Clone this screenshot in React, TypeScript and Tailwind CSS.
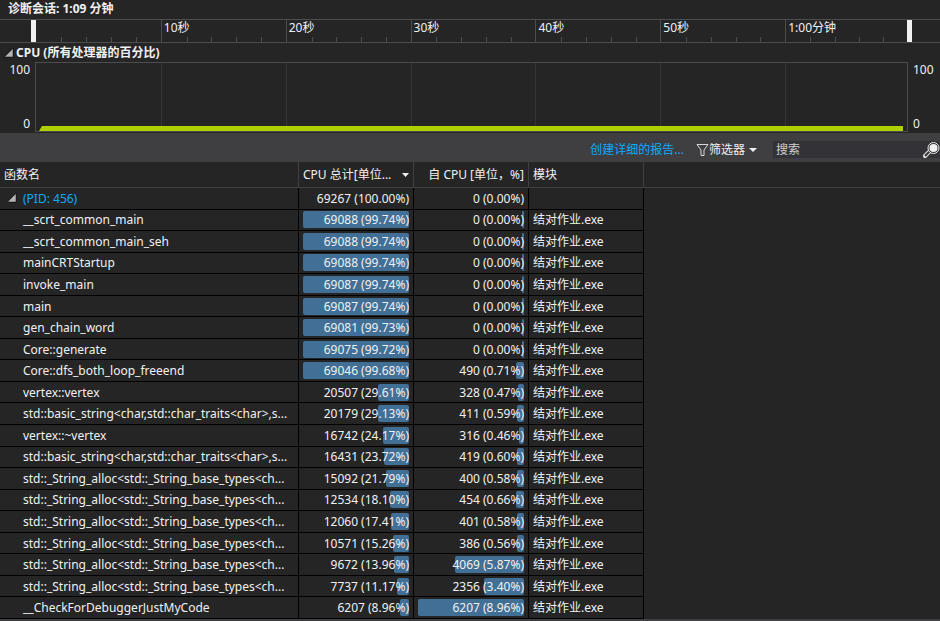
import { useState } from "react";

type Row = {
  name: string;
  total: number;
  totalPct: number;
  self: number;
  selfPct: number;
};

const MODULE = "结对作业.exe";
const BASIC_STRING = "std::basic_string<char,std::char_traits<char>,s...";
const STRING_ALLOC = "std::_String_alloc<std::_String_base_types<ch...";

const rows: Row[] = [
  { name: "__scrt_common_main", total: 69088, totalPct: 99.74, self: 0, selfPct: 0 },
  { name: "__scrt_common_main_seh", total: 69088, totalPct: 99.74, self: 0, selfPct: 0 },
  { name: "mainCRTStartup", total: 69088, totalPct: 99.74, self: 0, selfPct: 0 },
  { name: "invoke_main", total: 69087, totalPct: 99.74, self: 0, selfPct: 0 },
  { name: "main", total: 69087, totalPct: 99.74, self: 0, selfPct: 0 },
  { name: "gen_chain_word", total: 69081, totalPct: 99.73, self: 0, selfPct: 0 },
  { name: "Core::generate", total: 69075, totalPct: 99.72, self: 0, selfPct: 0 },
  { name: "Core::dfs_both_loop_freeend", total: 69046, totalPct: 99.68, self: 490, selfPct: 0.71 },
  { name: "vertex::vertex", total: 20507, totalPct: 29.61, self: 328, selfPct: 0.47 },
  { name: BASIC_STRING, total: 20179, totalPct: 29.13, self: 411, selfPct: 0.59 },
  { name: "vertex::~vertex", total: 16742, totalPct: 24.17, self: 316, selfPct: 0.46 },
  { name: BASIC_STRING, total: 16431, totalPct: 23.72, self: 419, selfPct: 0.6 },
  { name: STRING_ALLOC, total: 15092, totalPct: 21.79, self: 400, selfPct: 0.58 },
  { name: STRING_ALLOC, total: 12534, totalPct: 18.1, self: 454, selfPct: 0.66 },
  { name: STRING_ALLOC, total: 12060, totalPct: 17.41, self: 401, selfPct: 0.58 },
  { name: STRING_ALLOC, total: 10571, totalPct: 15.26, self: 386, selfPct: 0.56 },
  { name: STRING_ALLOC, total: 9672, totalPct: 13.96, self: 4069, selfPct: 5.87 },
  { name: STRING_ALLOC, total: 7737, totalPct: 11.17, self: 2356, selfPct: 3.4 },
  { name: "__CheckForDebuggerJustMyCode", total: 6207, totalPct: 8.96, self: 6207, selfPct: 8.96 },
];

const maxSelf = Math.max(...rows.map((r) => r.selfPct));
const segments = ["", "10秒", "20秒", "30秒", "40秒", "50秒", "1:00分钟"];

function Expander() {
  return (
    <svg width="10" height="10" viewBox="0 0 10 10" className="shrink-0">
      <path d="M9.500 0v9.500H0z" fill="#0c0c0c" />
      <path d="M8.500 1.500v7H1.500z" fill="#b4b4b4" stroke="#b4b4b4" strokeWidth="0.500" />
    </svg>
  );
}

function Ruler() {
  return (
    <div className="flex h-6 border-y border-[#4d4d50]">
      <div className="flex w-9 justify-end">
        <div className="w-[5px] bg-[#f1f1f1]" />
      </div>
      <div className="grid flex-1 grid-cols-[repeat(6,40fr)_39fr]">
        {segments.map((label, i) => (
          <div
            key={i}
            className={`flex flex-col justify-between ${i > 0 ? "border-l border-[#4d4d50]" : ""}`}
          >
            <span className="h-4 pl-0.5 leading-4 whitespace-nowrap">{label}</span>
            <div className="grid h-[5px] grid-cols-5">
              {[0, 1, 2, 3, 4].map((t) => (
                <div key={t} className={t > 0 ? "border-l border-[#4d4d50]" : ""} />
              ))}
            </div>
          </div>
        ))}
      </div>
      <div className="flex w-[33px]">
        <div className="w-[5px] bg-[#f1f1f1]" />
      </div>
    </div>
  );
}

function CpuChart() {
  return (
    <div className="flex h-[70px]">
      <div className="flex w-[35px] flex-col justify-between pr-[5px] text-right leading-4">
        <span>100</span>
        <span>0</span>
      </div>
      <div className="flex flex-1 flex-col border border-[#4d4d50]">
        <div className="grid flex-1 grid-cols-[repeat(6,40fr)_39fr]">
          {segments.map((_, i) => (
            <div key={i} className={i > 0 ? "border-l border-[#363638]" : ""} />
          ))}
        </div>
        <svg
          className="block h-[5px] w-full pr-1 pl-[3px]"
          viewBox="0 0 864 5"
          preserveAspectRatio="none"
        >
          <path d="M0 5 3 0H864V5z" fill="#b0d000" />
        </svg>
      </div>
      <div className="flex w-8 flex-col justify-between pl-[5px] leading-4">
        <span>100</span>
        <span>0</span>
      </div>
    </div>
  );
}

function Toolbar() {
  const [query, setQuery] = useState("");

  return (
    <div className="mt-px flex h-[29px] items-center justify-end bg-[#3f3f42] pt-1">
      <a href="#report" className="mr-3 text-[#0aaaff]">
        创建详细的报告...
      </a>
      <button type="button" className="mr-4 flex items-center">
        <svg width="13" height="14" viewBox="0 0 13 14" fill="none">
          <path d="M1 1.500h11L8 7v5.500H5V7z" stroke="#d8d8d8" />
        </svg>
        <span>筛选器</span>
        <svg width="8" height="4" viewBox="0 0 8 4" className="ml-1">
          <path d="M0 0h8L4 4z" fill="#f1f1f1" />
        </svg>
      </button>
      <label className="flex h-[17px] w-[167px] items-center bg-[#333337] pl-[3px]">
        <input
          aria-label="搜索"
          placeholder="搜索"
          value={query}
          onChange={(e) => setQuery(e.target.value)}
          className="w-full min-w-0 flex-1 bg-transparent outline-none placeholder:text-[#d0d0d0]"
        />
        <svg width="18" height="18" viewBox="0 0 18 18" className="shrink-0">
          <path d="M7.500 10.500 3 15" stroke="#e8e8e8" strokeWidth="4" strokeLinecap="round" />
          <path d="M7.500 10.500 3 15" stroke="#333337" strokeWidth="2" />
          <circle cx="11.500" cy="7" r="5.500" fill="#333337" stroke="#e8e8e8" />
          <circle cx="11.500" cy="7" r="4" fill="#f1f1f1" />
        </svg>
      </label>
    </div>
  );
}

function Meter({ value, pct, max }: { value: number; pct: number; max: number }) {
  return (
    <div className="relative h-[17px] text-right leading-[17px]">
      <div
        className="absolute inset-y-0 right-0 min-w-0.5 rounded-[2px] bg-[#426f96]"
        style={{ width: `${(pct / max) * 100}%` }}
      />
      <span className="relative">
        {value} ({pct.toFixed(2)}%)
      </span>
    </div>
  );
}

const headCell = "border-r border-b border-[#3f3f46] p-0 px-1 text-left font-normal whitespace-nowrap";
const cell = "border-r border-b border-black p-0 px-1 whitespace-nowrap";

function FunctionTable() {
  return (
    <table className="h-[457px] w-full table-fixed border-separate border-spacing-0">
      <colgroup>
        <col className="w-[299px]" />
        <col className="w-[115px]" />
        <col className="w-[115px]" />
        <col className="w-[115px]" />
        <col />
      </colgroup>
      <thead>
        <tr className="h-[26px]">
          <th className={headCell}>函数名</th>
          <th className={headCell}>
            <div className="flex items-center justify-between">
              <span>CPU 总计[单位...</span>
              <svg width="7" height="4" viewBox="0 0 7 4">
                <path d="M0 0h7L3.500 4z" fill="#f1f1f1" />
              </svg>
            </div>
          </th>
          <th className={headCell}>
            <div className="text-right">自 CPU [单位，%]</div>
          </th>
          <th className={headCell}>模块</th>
          <th className="border-b border-[#3f3f46] p-0" />
        </tr>
      </thead>
      <tbody>
        <tr>
          <td className={cell}>
            <div className="flex items-center gap-1.5 pl-[3px] leading-[17px] text-[#0aaaff]">
              <Expander />
              (PID: 456)
            </div>
          </td>
          <td className={`${cell} text-right leading-[17px]`}>69267 (100.00%)</td>
          <td className={`${cell} text-right leading-[17px]`}>0 (0.00%)</td>
          <td className={cell} />
          <td className="p-0" />
        </tr>
        {rows.map((r, i) => (
          <tr key={i}>
            <td className={`${cell} leading-[17px]`}>
              <div className="pl-[19px]">{r.name}</div>
            </td>
            <td className={cell}>
              <Meter value={r.total} pct={r.totalPct} max={100} />
            </td>
            <td className={cell}>
              <Meter value={r.self} pct={r.selfPct} max={maxSelf} />
            </td>
            <td className={`${cell} leading-[17px]`}>{MODULE}</td>
            <td className="p-0" />
          </tr>
        ))}
      </tbody>
    </table>
  );
}

export default function App() {
  return (
    <main className="min-h-screen overflow-hidden bg-[#252526] font-['Noto_Sans','Noto_Sans_CJK_SC',sans-serif] text-xs text-[#f1f1f1]">
      <h1 className="h-[19px] pl-2 leading-[17px] font-bold">诊断会话: 1:09 分钟</h1>
      <Ruler />
      <h2 className="flex h-[19px] items-center gap-0.5 pl-1 font-bold">
        <Expander />
        CPU (所有处理器的百分比)
      </h2>
      <CpuChart />
      <Toolbar />
      <FunctionTable />
      <div className="h-0.5 bg-[#3f3f42]" />
    </main>
  );
}
